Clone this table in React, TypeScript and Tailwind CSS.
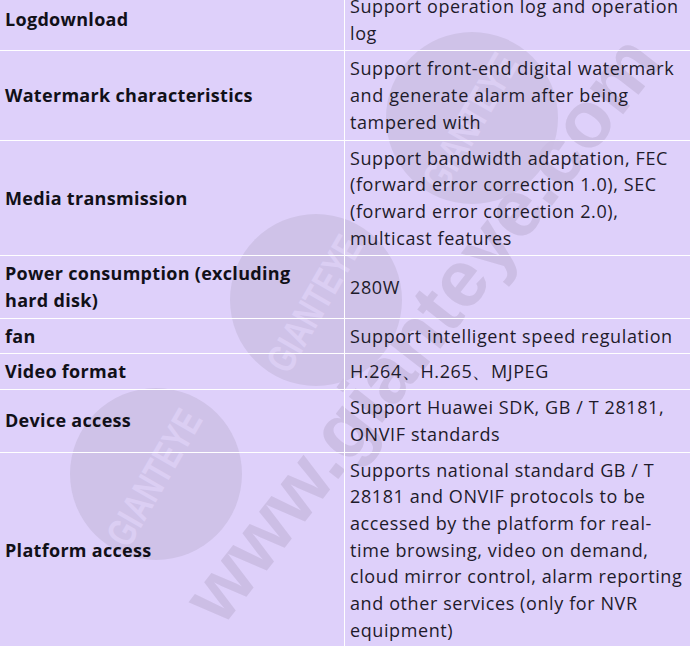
const rows: { label: string; value: string }[] = [
  { label: 'Logdownload', value: 'Support operation log and operation log' },
  {
    label: 'Watermark characteristics',
    value: 'Support front-end digital watermark and generate alarm after being tampered with',
  },
  {
    label: 'Media transmission',
    value:
      'Support bandwidth adaptation, FEC (forward error correction 1.0), SEC (forward error correction 2.0), multicast features',
  },
  { label: 'Power consumption (excluding hard disk)', value: '280W' },
  { label: 'fan', value: 'Support intelligent speed regulation' },
  { label: 'Video format', value: 'H.264、H.265、MJPEG' },
  { label: 'Device access', value: 'Support Huawei SDK, GB / T 28181, ONVIF standards' },
  {
    label: 'Platform access',
    value:
      'Supports national standard GB / T 28181 and ONVIF protocols to be accessed by the platform for real-time browsing, video on demand, cloud mirror control, alarm reporting and other services (only for NVR equipment)',
  },
];

function Watermark() {
  const circles = [
    { cx: 472, cy: 118 },
    { cx: 316, cy: 300 },
    { cx: 156, cy: 474 },
  ];
  return (
    <svg className="absolute inset-0 pointer-events-none" width="690" height="646" viewBox="0 0 690 646">
      {circles.map((c) => (
        <g key={c.cy}>
          <circle cx={c.cx} cy={c.cy} r="86" fill="#cfc2e8" />
          <text
            x={c.cx - 4}
            y={c.cy + 14}
            transform={`rotate(-60 ${c.cx} ${c.cy})`}
            textAnchor="middle"
            fill="#dbcef3"
            fontFamily="'Liberation Sans', sans-serif"
            fontWeight="700"
            fontSize="40"
            textLength="150"
            lengthAdjust="spacingAndGlyphs"
          >
            GIANTEYE
          </text>
        </g>
      ))}
      <text
        x="222"
        y="628"
        transform="rotate(-52 222 628)"
        fill="#cbbde3"
        fontFamily="'Liberation Sans', sans-serif"
        fontWeight="700"
        fontSize="80"
        opacity="0.9"
      >
        www.gianteye.com
      </text>
    </svg>
  );
}

export default function App() {
  return (
    <div className="relative w-[690px] h-[646px] overflow-hidden bg-[#ded0fa]">
      <Watermark />
      <div className="relative -mt-[11px] font-['Open_Sans',sans-serif] text-[18px] leading-[26.7px]">
        {rows.map((row) => (
          <div key={row.label} className="flex border-b border-white">
            <div className="w-[345px] shrink-0 border-r border-white pl-[5px] pr-[20px] py-1 flex items-center font-bold tracking-[0.3px] text-[#111018]">
              {row.label}
            </div>
            <div className="flex-1 px-[5px] py-1 flex items-center tracking-[0.6px] text-[#1e1b2b]">
              {row.value}
            </div>
          </div>
        ))}
      </div>
    </div>
  );
}
